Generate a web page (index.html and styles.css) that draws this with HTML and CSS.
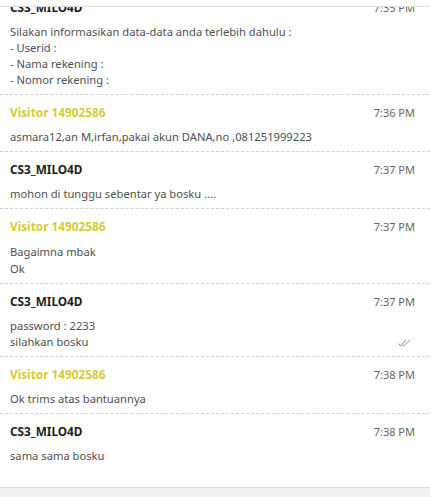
FILE: index.html
```html
<!DOCTYPE html>
<html>
<head>
<meta charset="utf-8">
<link rel="stylesheet" href="styles.css">
</head>
<body>
<div class="app">
  <div class="topgap"></div>
  <div class="chat">
    <div class="list">
      <div class="row">
        <div class="head"><span class="name agent">CS3_MILO4D</span><span class="time">7:35 PM</span></div>
        <div class="msg">Silakan informasikan data-data anda terlebih dahulu :<br>- Userid :<br>- Nama rekening :<br>- Nomor rekening :</div>
      </div>
      <div class="row">
        <div class="head"><span class="name visitor">Visitor 14902586</span><span class="time">7:36 PM</span></div>
        <div class="msg">asmara12,an M,irfan,pakai akun DANA,no ,081251999223</div>
      </div>
      <div class="row">
        <div class="head"><span class="name agent">CS3_MILO4D</span><span class="time">7:37 PM</span></div>
        <div class="msg">mohon di tunggu sebentar ya bosku ....</div>
      </div>
      <div class="row">
        <div class="head"><span class="name visitor">Visitor 14902586</span><span class="time">7:37 PM</span></div>
        <div class="msg loose">Bagaimna mbak<br>Ok</div>
      </div>
      <div class="row">
        <div class="head"><span class="name agent">CS3_MILO4D</span><span class="time">7:37 PM</span></div>
        <div class="msg withcheck"><span>password : 2233<br>silahkan bosku</span>
          <svg class="check" width="13" height="8" viewBox="0 0 13 8"><path d="M0.5 4.5 L2.5 7 L8 0.8 M4.5 6.2 L5.5 7 L12 0.8" fill="none" stroke="#8a8a8a" stroke-width="1"/></svg>
        </div>
      </div>
      <div class="row">
        <div class="head"><span class="name visitor">Visitor 14902586</span><span class="time">7:38 PM</span></div>
        <div class="msg">Ok trims atas bantuannya</div>
      </div>
      <div class="row last">
        <div class="head"><span class="name agent">CS3_MILO4D</span><span class="time">7:38 PM</span></div>
        <div class="msg">sama sama bosku</div>
      </div>
    </div>
  </div>
  <div class="footer"></div>
</div>
</body>
</html>
```
FILE: styles.css
```css
html, body {
  margin: 0;
  padding: 0;
  background: #fff;
}
.app {
  width: 430px;
  height: 497px;
  display: flex;
  flex-direction: column;
  font-family: "Noto Sans", "Open Sans", sans-serif;
}
.topgap {
  height: 6px;
  flex: none;
}
.chat {
  border-top: 1px solid #dcdcdc;
  height: 480px;
  flex: none;
  overflow: hidden;
}
.list {
  margin-top: -17px;
}
.row {
  padding: 7px 15px 6px 10px;
  border-bottom: 1px dashed #d2d2d2;
}
.row.last {
  border-bottom: none;
}
.head {
  display: flex;
  justify-content: space-between;
  align-items: center;
  height: 20px;
}
.name {
  font-size: 11.8px;
  font-weight: 700;
}
.name.agent {
  color: #1e1e1e;
}
.name.visitor {
  color: #d5cc35;
}
.time {
  font-size: 11px;
  color: #666;
}
.msg {
  margin-top: 7px;
  font-size: 11.2px;
  line-height: 16px;
  color: #505050;
}
.msg.loose {
  line-height: 17px;
}
.withcheck {
  display: flex;
  justify-content: space-between;
  align-items: flex-end;
}
.check {
  margin: 0 4px 3px 0;
}
.footer {
  flex: 1;
  background: #f0f0f0;
  border-top: 1px solid #dcdcdc;
}
```
